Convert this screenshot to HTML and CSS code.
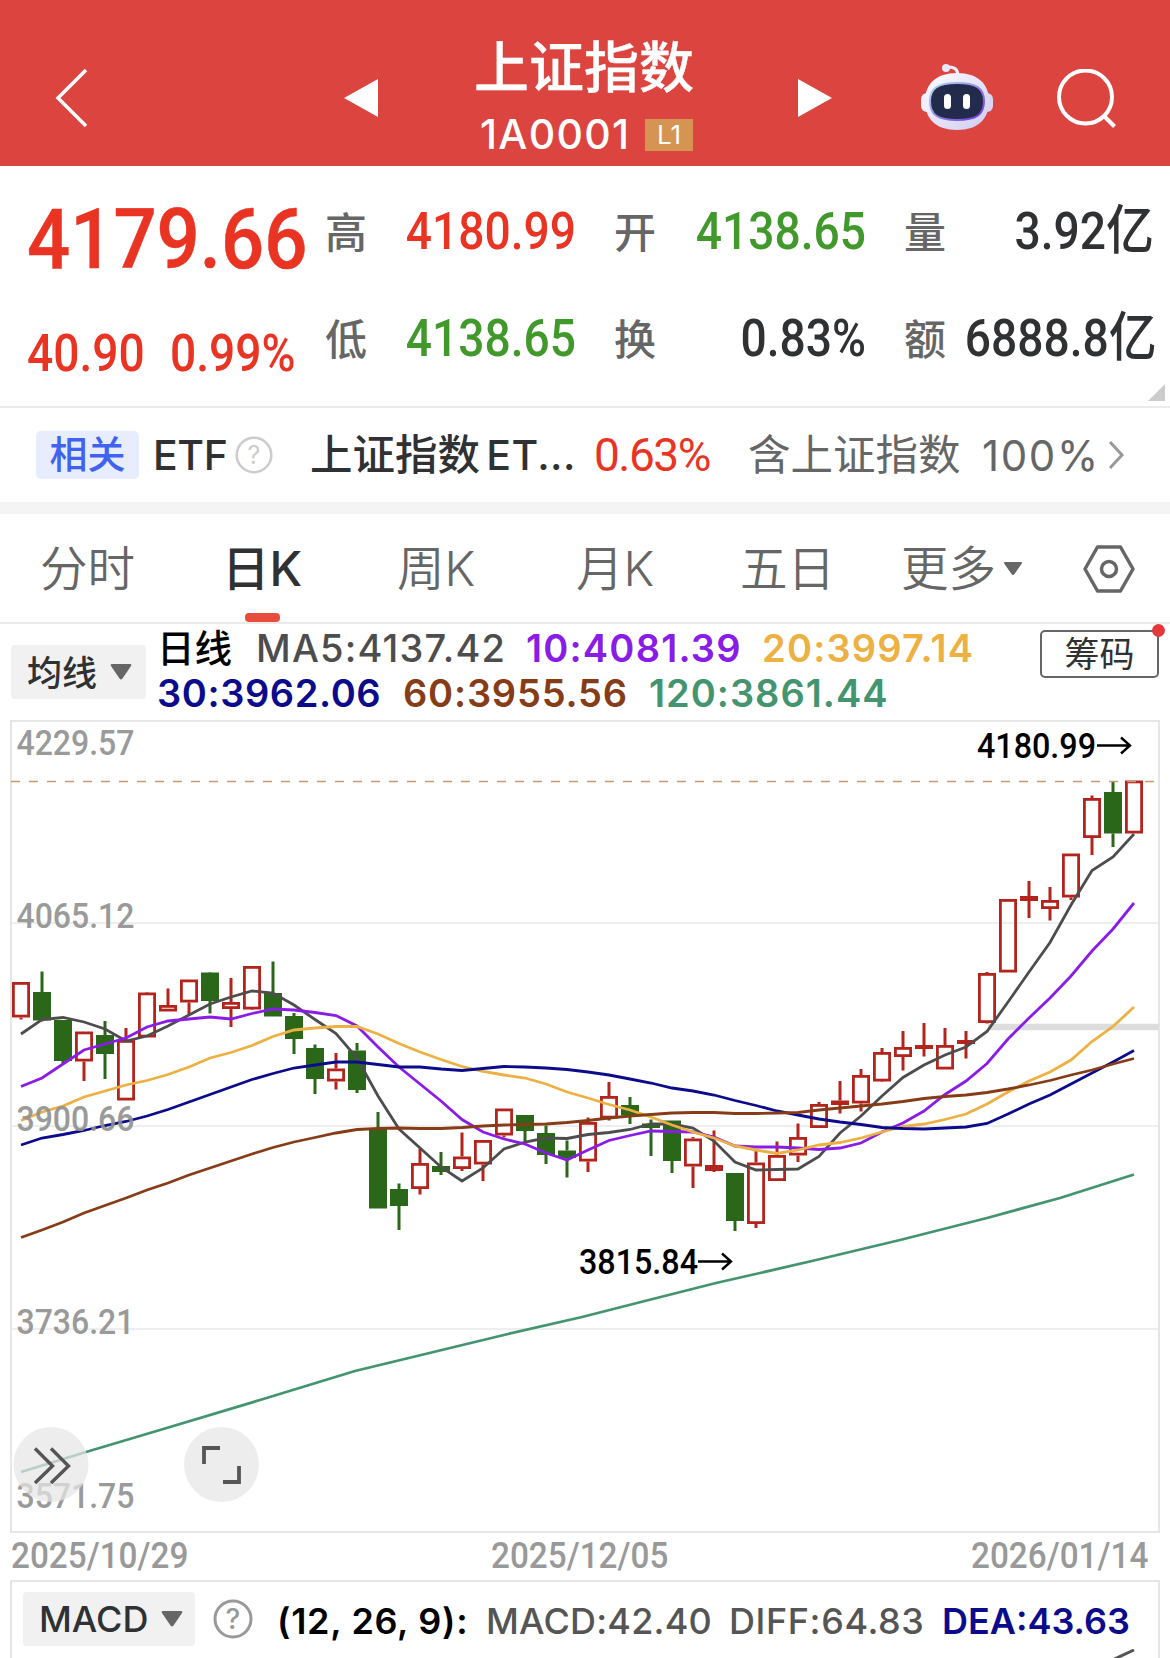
FILE: index.html
```html
<!DOCTYPE html>
<html lang="zh-CN">
<head>
    <meta charset="UTF-8">
    <meta name="viewport" content="width=device-width, initial-scale=1.0">
    <title>上证指数</title>
    <link rel="stylesheet" href="styles.css">
</head>
<body>

    <header class="header">
        <svg class="back" width="34" height="60" viewBox="0 0 34 60"><path d="M31 2 L3 30 L31 58" fill="none" stroke="#fff" stroke-width="3.5"/></svg>
        <svg class="prev" width="36" height="40" viewBox="0 0 36 40"><path d="M34 1 V39 L0 20 Z" fill="#fff"/></svg>
        <div class="title">
            <h1>上证指数</h1>
            <div class="code"><span>1A0001</span><span class="level">L1</span></div>
        </div>
        <svg class="next" width="36" height="40" viewBox="0 0 36 40"><path d="M2 1 V39 L36 20 Z" fill="#fff"/></svg>
        <svg class="robot" width="74" height="68" viewBox="0 0 74 68">
            <defs>
                <linearGradient id="shell" x1="0" y1="0" x2="1" y2="1">
                    <stop offset="0" stop-color="#fff"/>
                    <stop offset="0.5" stop-color="#e6e4f8"/>
                    <stop offset="1" stop-color="#cfcaf0"/>
                </linearGradient>
                <linearGradient id="rim" x1="0" y1="0" x2="1" y2="1">
                    <stop offset="0" stop-color="#b5dcf0"/>
                    <stop offset="1" stop-color="#6a35d8"/>
                </linearGradient>
            </defs>
            <path d="M27 4 Q38 3 38 13" fill="none" stroke="#efeefb" stroke-width="3"/>
            <circle cx="26" cy="5" r="4" fill="#e9e7fa"/>
            <rect x="1" y="30" width="14" height="19" rx="6" fill="#f1effc"/>
            <rect x="59" y="30" width="14" height="19" rx="6" fill="#d9d5f3"/>
            <path d="M37 10 C58 10 69 21 69 38 C69 56 58 67 37 67 C16 67 5 56 5 38 C5 21 16 10 37 10 Z" fill="url(#shell)"/>
            <path d="M37 20 C56 20 64 25 64 38 C64 52 56 57 37 57 C18 57 10 52 10 38 C10 25 18 20 37 20 Z" fill="#232b4d" stroke="url(#rim)" stroke-width="2"/>
            <rect x="24" y="31" width="7" height="15" rx="3.5" fill="#fff"/>
            <rect x="43" y="31" width="7" height="15" rx="3.5" fill="#fff"/>
        </svg>
        <svg class="search" width="60" height="60" viewBox="0 0 60 60"><circle cx="28.500" cy="28" r="26.500" fill="none" stroke="#fff" stroke-width="4"/><path d="M47 47 L57.500 57.500" stroke="#fff" stroke-width="4"/></svg>
    </header>

    <section class="quote">
        <div class="price">
            <div class="last">4179.66</div>
            <div class="change"><span>40.90</span><span>0.99%</span></div>
        </div>
        <dl class="stats">
            <dt>高</dt><dd class="up">4180.99</dd>
            <dt>开</dt><dd class="down">4138.65</dd>
            <dt>量</dt><dd>3.92<i>亿</i></dd>
            <dt>低</dt><dd class="down">4138.65</dd>
            <dt>换</dt><dd>0.83%</dd>
            <dt>额</dt><dd>6888.8<i>亿</i></dd>
        </dl>
        <span class="corner"></span>
    </section>

    <section class="etf">
        <span class="tag">相关</span>
        <span class="etf-label">ETF</span>
        <svg class="help" width="38" height="38" viewBox="0 0 38 38"><circle cx="19" cy="19" r="17.300" fill="none" stroke="#ccc" stroke-width="2.500"/><text x="19" y="28" text-anchor="middle" font-size="25" fill="#ccc">?</text></svg>
        <span class="etf-name">上证指数 <span class="latin">ET...</span></span>
        <span class="etf-change">0.63%</span>
        <span class="etf-hold">含上证指数</span>
        <span class="etf-rate">100%</span>
        <svg class="more" width="17" height="30" viewBox="0 0 17 30"><path d="M2 2 L14 15 L2 28" fill="none" stroke="#999" stroke-width="3"/></svg>
    </section>

    <nav class="tabs">
        <span>分时</span>
        <span class="active">日K</span>
        <span>周K</span>
        <span>月K</span>
        <span>五日</span>
        <span>更多</span>
        <svg class="tab-arrow" width="20" height="16" viewBox="0 0 20 16"><path d="M2 1 H18 Q20 1 18.500 3 L11.500 13 Q10 15 8.500 13 L1.500 3 Q0 1 2 1 Z" fill="#666"/></svg>
        <svg class="setting" width="52" height="48" viewBox="0 0 52 48"><path d="M14.500 2 H37.500 L50 24 L37.500 46 H14.500 L2 24 Z" fill="none" stroke="#666" stroke-width="3.500" stroke-linejoin="round"/><circle cx="26" cy="24" r="7.500" fill="none" stroke="#666" stroke-width="3.500"/></svg>
    </nav>

    <section class="ma">
        <button class="select"><span>均线</span><svg width="22" height="18" viewBox="0 0 22 18"><path d="M2 1 H20 Q22 1 21 3 L12.500 15.500 Q11 17.500 9.500 15.500 L1 3 Q0 1 2 1 Z" fill="#666"/></svg></button>
        <div class="ma-values">
            <div class="ma-line ma-first">
                <b>日线</b><span class="c5">MA5:4137.42</span><span class="c10">10:4081.39</span><span class="c20">20:3997.14</span>
            </div>
            <div class="ma-line ma-second">
                <span class="c30">30:3962.06</span><span class="c60">60:3955.56</span><span class="c120">120:3861.44</span>
            </div>
        </div>
        <button class="chips">筹码<i class="dot"></i></button>
    </section>

    <section class="chart">
        <svg id="kline" width="1170" height="814" viewBox="0 719 1170 814"></svg>
    </section>

    <div class="dates"><span>2025/10/29</span><span>2025/12/05</span><span>2026/01/14</span></div>

    <section class="macd">
        <div class="macd-row">
            <button class="select">MACD<svg width="22" height="18" viewBox="0 0 22 18"><path d="M2 1 H20 Q22 1 21 3 L12.500 15.500 Q11 17.500 9.500 15.500 L1 3 Q0 1 2 1 Z" fill="#666"/></svg></button>
            <svg class="help" width="40" height="40" viewBox="0 0 40 40"><circle cx="20" cy="20" r="18" fill="none" stroke="#999" stroke-width="3"/><text x="20" y="30" text-anchor="middle" font-size="28" fill="#999">?</text></svg>
            <b>(12, 26, 9):</b>
            <span class="m1">MACD:42.40</span>
            <span class="m2">DIFF:64.83</span>
            <span class="m3">DEA:43.63</span>
        </div>
        <svg class="macd-line" width="1146" height="10" viewBox="12 1648 1146 10"><path d="M1108 1661 L1134 1649" stroke="#555" stroke-width="3"/></svg>
    </section>

    <script src="chart.js"></script>
</body>
</html>
```
FILE: styles.css
```css
* {
    box-sizing: border-box;
}
body {
    margin: 0;
    width: 1170px;
    height: 1658px;
    overflow: hidden;
    background: #fff;
    color: #303133;
    font-family: Inter, "Noto Sans CJK SC", sans-serif;
}
svg {
    display: block;
    flex: none;
}
i {
    font-style: normal;
}
span, b, dt, dd {
    white-space: nowrap;
}
button {
    border: none;
    padding: 0;
    font-family: inherit;
    color: #303133;
}

/* header */
.header {
    display: flex;
    height: 166px;
    background: #dc4440;
    color: #fff;
}
.back {
    margin: 68px 0 0 55px;
}
.prev {
    margin: 78px 0 0 255px;
}
.title {
    width: 418px;
    padding-top: 31px;
}
.title h1 {
    margin: 0 0 0 -10px;
    font-size: 55px;
    font-weight: 500;
    line-height: 72px;
    text-align: center;
    -webkit-text-stroke: 0.4px #fff;
}
.code {
    display: flex;
    align-items: center;
    height: 32px;
    margin: 16px 0 0 100px;
    font-size: 41px;
    font-weight: 500;
    line-height: 30px;
    letter-spacing: 1.3px;
}
.code span:first-child {
    width: 165px;
    padding-bottom: 3px;
}
.level {
    width: 48px;
    height: 32px;
    background: #d69453;
    font-size: 26px;
    font-weight: 400;
    letter-spacing: 0;
    line-height: 31px;
    text-align: center;
}
.next {
    margin: 78px 0 0 -2px;
}
.robot {
    margin: 63px 0 0 88px;
}
.search {
    margin: 69px 0 0 63px;
}

/* quote */
.quote {
    position: relative;
    display: flex;
    height: 242px;
    border-bottom: 2px solid #ebebeb;
}
.price {
    width: 325px;
    padding: 30px 0 0 27px;
    color: #e93323;
    font-family: Roboto, sans-serif;
    font-weight: 500;
}
.last {
    font-size: 84px;
    line-height: 88px;
    transform: scaleX(0.905);
    transform-origin: left;
    -webkit-text-stroke: 0.5px #e93323;
}
.change {
    display: flex;
    margin-top: 44px;
    font-size: 51px;
    line-height: 52px;
    transform: scaleX(0.905);
    transform-origin: left;
}
.change span:first-child {
    width: 158px;
}
.stats {
    display: grid;
    grid-template-columns: 42px 209px 80px 210px 79px 209px;
    grid-template-rows: 107px 107px;
    margin: 12px 0 0;
    line-height: 107px;
}
.stats dt {
    padding-top: 1px;
    color: #666;
    font-size: 42px;
    font-weight: 500;
}
.stats dt:nth-of-type(3n+2),
.stats dt:nth-of-type(3n) {
    padding-left: 38px;
}
.stats dd {
    margin: 0;
    font-family: Roboto, "Noto Sans CJK SC", sans-serif;
    font-size: 51px;
    font-weight: 500;
    text-align: right;
    transform: scaleX(0.905);
    transform-origin: right;
}
.stats i {
    font-size: 53px;
    font-weight: 500;
}
.up {
    color: #e93323;
}
.down {
    color: #41982b;
}
.corner {
    position: absolute;
    right: 5px;
    bottom: 5px;
    border-left: 17px solid transparent;
    border-bottom: 17px solid #ccc;
}

/* related etf */
.etf {
    display: grid;
    grid-template-columns: 117px 82px 75px 284px 154px 234px 126px 17px;
    align-items: center;
    height: 106px;
    padding: 0 0 12px 36px;
    background: linear-gradient(#fff 94px, #f4f4f4 94px);
    font-size: 42.5px;
}
.help text {
    font-family: Inter, sans-serif;
}
.tag {
    width: 103px;
    height: 48px;
    margin-top: -1px;
    border-radius: 5px;
    background: #e8edfd;
    color: #3f62f0;
    font-size: 38px;
    font-weight: 500;
    line-height: 47px;
    text-align: center;
}
.etf-label, .etf-name {
    font-weight: 500;
}
.etf-label {
    font-size: 41px;
    letter-spacing: -0.4px;
}
.etf-name {
    padding-bottom: 7px;
    word-spacing: -5px;
}
.latin {
    font-size: 41px;
    letter-spacing: 0.4px;
}
.etf-change {
    color: #e93323;
    font-family: Roboto, sans-serif;
    font-size: 46px;
    letter-spacing: -1.5px;
}
.etf-hold, .etf-rate {
    color: #666;
}
.etf-hold {
    padding-bottom: 7px;
}
.etf-rate {
    font-size: 42px;
    letter-spacing: 1.6px;
}

/* period tabs */
.tabs {
    display: grid;
    grid-template-columns: 182px 175px 179px 164px 161px 102px 80px 52px;
    align-items: center;
    height: 110px;
    padding-left: 40px;
    border-bottom: 2px solid #ebebeb;
    color: #666;
    font-size: 47.5px;
    font-weight: 350;
    line-height: 110px;
}
.tabs .active {
    position: relative;
    color: #303133;
    font-weight: 500;
}
.active::after {
    content: "";
    position: absolute;
    left: 23px;
    bottom: 2px;
    width: 35px;
    height: 9px;
    border-radius: 4px;
    background: #e74c3c;
}

/* moving averages */
.ma {
    display: flex;
    height: 95px;
    padding-left: 11px;
}
.select {
    display: flex;
    align-items: center;
    border-radius: 4px;
    background: #f1f1f1;
    font-weight: 500;
}
.ma .select {
    width: 135px;
    height: 54px;
    margin-top: 21px;
    padding-left: 16px;
    font-size: 35px;
    gap: 13px;
}
.ma .select span {
    padding-bottom: 4px;
}
.ma-values {
    width: 883px;
    margin-left: 11px;
}
.ma-line {
    display: grid;
    font-size: 38px;
    font-weight: 600;
    line-height: 45px;
    letter-spacing: 0.6px;
}
.ma-first {
    grid-template-columns: 99px 270px 236px 230px;
    padding-top: 2px;
}
.ma-second {
    grid-template-columns: 246px 246px 250px;
}
.ma b {
    color: #000;
    font-size: 37.5px;
    font-weight: 500;
    letter-spacing: 0;
}
.ma .c5 { color: #4d4d4d; font-weight: 500; letter-spacing: 1.2px; }
.c10 { color: #8a1ce8; letter-spacing: 1.2px; }
.c20 { color: #edb143; letter-spacing: 1.2px; }
.c30 { color: #0b0b8c; }
.c60 { color: #873c18; letter-spacing: 0.8px; }
.c120 { color: #43946f; letter-spacing: 1px; }
.chips {
    position: relative;
    width: 119px;
    height: 48px;
    margin-top: 6px;
    border: 2px solid #666;
    border-radius: 5px;
    background: #fff;
    font-size: 35px;
    line-height: 42px;
}
.dot {
    position: absolute;
    top: -8px;
    right: -8px;
    width: 13px;
    height: 13px;
    border-radius: 50%;
    background: #e4393c;
}

/* chart */
.chart {
    height: 814px;
}
.chart text {
    font-family: Roboto, sans-serif;
    font-size: 35.5px;
    font-weight: 500;
}
.axis {
    fill: #909090;
    opacity: 0.9;
}
.mark {
    fill: #000;
}
.dates {
    display: grid;
    grid-template-columns: 480px 480px 200px;
    height: 48px;
    padding-left: 11px;
    color: #999;
    font-family: Roboto, sans-serif;
    font-size: 36px;
    font-weight: 500;
    line-height: 46px;
}
.dates span {
    transform: scaleX(0.925);
    transform-origin: left;
}

/* macd */
.macd {
    height: 90px;
    margin: -1px 10px 0;
    border: 2px solid #e6e6e6;
    border-bottom: none;
}
.macd-row {
    display: grid;
    grid-template-columns: 190px 64px 209px 243px 213px 200px;
    align-items: center;
    height: 67px;
    padding: 7px 0 0 11px;
    font-size: 36px;
    font-weight: 500;
}
.macd-row b,
.macd-row span {
    padding-top: 3px;
}
.macd .select {
    width: 172px;
    height: 54px;
    padding-left: 16px;
    font-size: 36px;
    gap: 13px;
}
.macd b {
    color: #000;
    font-weight: 600;
    letter-spacing: 0.7px;
}
.m1, .m2 {
    color: #555;
}
.m1 {
    letter-spacing: 0.2px;
}
.m2 {
    letter-spacing: 0.6px;
}
.m3 {
    color: #0b0b8c;
    font-weight: 600;
}
```
FILE: chart.js
```js
const NS = "http://www.w3.org/2000/svg";
const svg = document.getElementById("kline");
const STEP = 21;
const START = 21;

// [rising, body top, body bottom, high, low]
const candles = [
    [1, 982, 1017.5, 982, 1019.5], [0, 992, 1020.5, 971.5, 1021.5], [0, 1020, 1061, 1020, 1064],
    [1, 1031.5, 1061.5, 1031.5, 1081], [0, 1035, 1054, 1021, 1079], [1, 1040, 1100.5, 1028, 1100.5],
    [1, 992.5, 1037.5, 992, 1037.5], [1, 1005, 1011.5, 988.5, 1011.5], [1, 979.5, 1002.5, 979.5, 1015],
    [0, 972.5, 1001, 972, 1013.5], [1, 1002, 1009, 978, 1027], [1, 966, 1009.5, 966, 1010],
    [0, 993, 1016.5, 961.5, 1016.5], [0, 1016, 1039, 1013, 1054], [0, 1048, 1079, 1044.5, 1094],
    [1, 1068.5, 1081.5, 1053, 1089.5], [0, 1050.5, 1090, 1043, 1093], [0, 1128.5, 1208.5, 1112, 1208.5],
    [0, 1189, 1206, 1183.5, 1230], [1, 1163, 1189, 1148.5, 1194.5], [0, 1166, 1172, 1152, 1175],
    [1, 1156.5, 1169, 1132.5, 1171], [1, 1140, 1164.5, 1140, 1181], [1, 1108.5, 1135.5, 1108.5, 1137.5],
    [0, 1115, 1131, 1115, 1141], [0, 1133, 1155, 1125.5, 1164], [0, 1150.5, 1158, 1140.5, 1177.5],
    [1, 1122, 1161.5, 1117.5, 1172], [1, 1096, 1118.5, 1082, 1120.5], [0, 1105, 1115.5, 1097, 1124],
    [0, 1123.5, 1128, 1119.5, 1156], [0, 1120.5, 1161, 1120.5, 1173], [1, 1138.5, 1166.5, 1137, 1188],
    [1, 1165, 1171, 1130.5, 1172], [0, 1173, 1221, 1173, 1231], [1, 1162.5, 1224, 1151, 1228],
    [1, 1155, 1181, 1141.5, 1181], [1, 1137, 1155.5, 1123.5, 1162], [1, 1104, 1128, 1102, 1128],
    [1, 1100.5, 1105, 1081, 1113.5], [1, 1075, 1103.5, 1069, 1111.5], [1, 1052, 1081.5, 1048, 1082],
    [1, 1047, 1057, 1031, 1070.5], [1, 1045, 1049, 1023, 1056.5], [1, 1045, 1069.5, 1028, 1069.5],
    [1, 1040, 1044, 1031, 1058.5], [1, 973, 1023, 972, 1023.5], [1, 899, 972.5, 899, 972.5],
    [1, 896, 901, 881, 918], [1, 900, 909, 887, 920.5], [1, 853.5, 897.5, 853.5, 900],
    [1, 798, 838, 795.5, 855], [0, 792, 833.5, 782, 847], [1, 780.5, 833.5, 780.5, 833.5]
];

const averages = {
    "#4d4d4d": [1034, 1019.5, 1017.5, 1022, 1029, 1041, 1036, 1026, 1015, 1004, 997, 991, 993, 1005, 1019.5, 1033.5, 1058, 1096, 1129, 1148, 1167, 1181, 1168, 1149, 1142, 1138, 1138.5, 1134.5, 1132.5, 1129.5, 1124, 1124, 1128, 1141, 1162, 1170, 1169.5, 1169, 1156.5, 1133, 1116, 1096, 1077.5, 1065, 1055, 1047, 1031.5, 1002, 972, 942.5, 905, 870.5, 857, 834],
    "#8a1ce8": [1086.5, 1078, 1064, 1050, 1044, 1038, 1027, 1021, 1019, 1017, 1019, 1013.5, 1009, 1010, 1012.5, 1015.5, 1026, 1047, 1067, 1084, 1101, 1119.5, 1132, 1139, 1144, 1153, 1160, 1150, 1140.5, 1135.5, 1131, 1131.5, 1132, 1137, 1146, 1147, 1147, 1148, 1149.5, 1148, 1143, 1132, 1123, 1111, 1094.5, 1081, 1063.5, 1039, 1018, 998, 976, 951, 929, 903],
    "#edb143": [1120.5, 1112, 1106, 1097, 1091, 1085, 1080.5, 1074.5, 1067, 1058, 1052.5, 1045.5, 1036.5, 1030, 1028, 1026.5, 1026.5, 1034, 1043.5, 1052, 1059.5, 1066.5, 1071.5, 1075, 1078, 1084, 1092, 1098, 1104.5, 1110, 1117, 1125, 1132, 1138, 1146, 1150, 1153.5, 1150, 1145, 1142.5, 1138, 1132, 1126.5, 1124, 1119.5, 1114, 1104, 1092, 1081, 1072, 1060, 1041.5, 1026.5, 1007],
    "#0b0b8c": [1145, 1138, 1134.5, 1130.5, 1125.5, 1121.5, 1116, 1109.5, 1102, 1094.5, 1087, 1079.5, 1073.5, 1068, 1065, 1062, 1062, 1064.5, 1067, 1067, 1069, 1070.5, 1068.5, 1066.5, 1067, 1068, 1069.5, 1072, 1075, 1079, 1083, 1088, 1091, 1095, 1100.5, 1105.5, 1111, 1115, 1119, 1122, 1124.5, 1127.5, 1128.5, 1129, 1128, 1127, 1123.5, 1114, 1104, 1095, 1084, 1073, 1062, 1050.5],
    "#873c18": [1237.5, 1230, 1222, 1213, 1205.5, 1198, 1190, 1183, 1175, 1168, 1161, 1154, 1147.5, 1142, 1137.5, 1133, 1129.5, 1128.5, 1128, 1128.5, 1128.5, 1127.5, 1126, 1125, 1124.5, 1124, 1122.5, 1120.5, 1118, 1116, 1114.5, 1113, 1112.5, 1112.5, 1113.5, 1113.5, 1113, 1112.5, 1110, 1108, 1106, 1104, 1101.5, 1098.5, 1096.5, 1095, 1092.5, 1089, 1085, 1080.5, 1075, 1070, 1064, 1058.5]
};

function add(tag, attrs, text) {
    const el = document.createElementNS(NS, tag);
    for (const key in attrs) {
        el.setAttribute(key, attrs[key]);
    }
    if (text) {
        el.textContent = text;
    }
    svg.appendChild(el);
    return el;
}

function line(d, color, width) {
    return add("path", { d: d, fill: "none", stroke: color, "stroke-width": width });
}

// Frame and grid
line("M11 721 H1159 V1532 H11 Z", "#e6e6e6", 2);
[923, 1126, 1329].forEach(y => line("M11 " + y + " H1159", "#e9e9e9", 1.6));
line("M988 1027 H1159", "#dddddd", 6.5);

// Candles
candles.forEach((c, i) => {
    const [rising, top, bottom, high, low] = c;
    const x = START + i * STEP;
    const color = rising ? "#b3241c" : "#2a6718";
    line(`M${x} ${high} V${top} M${x} ${bottom} V${low}`, color, 3);
    if (rising && bottom - top > 6) {
        add("rect", { x: x - 7.6, y: top + 1.4, width: 15.2, height: bottom - top - 2.8, fill: "none", stroke: color, "stroke-width": 2.8 });
    } else {
        add("rect", { x: x - 9, y: top, width: 18, height: bottom - top, fill: color });
    }
});

// Last price
line("M11 781.5 H1154", "#c99a72", 1.6).setAttribute("stroke-dasharray", "9 9");

// Averages
for (const color in averages) {
    line("M" + averages[color].map((y, i) => (START + i * STEP) + " " + y).join(" L"), color, 2.8);
}
line("M21 1472 L86 1452 L170 1427 L260 1400 L355 1371 L508 1334 L582 1317 L637 1303 L716 1283 L760 1273 L812 1261 L900 1240 L987 1218 L1060 1198 L1134 1174.5", "#43946f", 2.8);

// Axis labels
[["4229.57", 755], ["4065.12", 928], ["3900.66", 1131], ["3736.21", 1334], ["3571.75", 1508]].forEach(a => {
    add("text", { x: 16.5, y: a[1], class: "axis", textLength: 118, lengthAdjust: "spacingAndGlyphs" }, a[0]);
});

// High and low marks
add("text", { x: 977, y: 758, class: "mark", textLength: 119, lengthAdjust: "spacingAndGlyphs" }, "4180.99");
line("M1097 745.5 H1130 M1121 737.500 L1130 745.500 L1121 753.500", "#000", 2.4);
add("text", { x: 579, y: 1274, class: "mark", textLength: 119, lengthAdjust: "spacingAndGlyphs" }, "3815.84");
line("M698 1261.5 H731 M722 1253.500 L731 1261.500 L722 1269.500", "#000", 2.4);

// Round buttons over the chart
[51, 221.5].forEach(x => add("circle", { cx: x, cy: 1464.5, r: 37.5, fill: "#e6e6e6", "fill-opacity": 0.72 }));
line("M35 1448.500 L52.500 1466 L35 1483 M51 1448.500 L68.500 1466 L51 1483", "#555", 3.4);
line("M204 1464 V1448 H220 M239 1466 V1482 H223", "#555", 3.8);
```
